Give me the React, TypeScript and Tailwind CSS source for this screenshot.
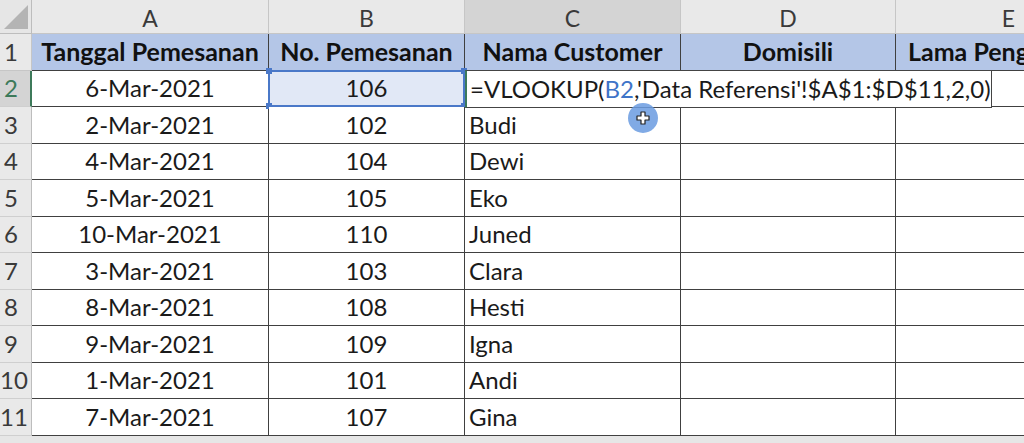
import React from "react";

const rows: [string, string, string][] = [
  ["6-Mar-2021", "106", ""],
  ["2-Mar-2021", "102", "Budi"],
  ["4-Mar-2021", "104", "Dewi"],
  ["5-Mar-2021", "105", "Eko"],
  ["10-Mar-2021", "110", "Juned"],
  ["3-Mar-2021", "103", "Clara"],
  ["8-Mar-2021", "108", "Hesti"],
  ["9-Mar-2021", "109", "Igna"],
  ["1-Mar-2021", "101", "Andi"],
  ["7-Mar-2021", "107", "Gina"],
];

const font = { fontFamily: "Lato, 'Open Sans', sans-serif" };

export default function App() {
  return (
    <div className="w-[1024px] h-[443px] overflow-hidden bg-[#e6e6e6] relative" style={font}>
      <div className="grid grid-cols-[32px_237px_196px_216px_215px_226px] grid-rows-[34px_repeat(11,36.5px)] w-[1122px]">
        {/* Header row */}
        <div className="bg-[#e6e6e6] border-r border-b border-[#bdbdbd] relative">
          <svg className="absolute left-[3px] top-[4px]" width="26" height="26" viewBox="0 0 26 26">
            <polygon points="1,25 25,25 25,1" fill="#b4b4b4" />
          </svg>
        </div>
        {["A", "B", "C", "D", "E"].map((l) => (
          <div
            key={l}
            className={`flex items-center justify-center text-[23px] text-[#3a3a3a] border-r border-b border-[#c6c6c6] ${
              l === "C" ? "bg-[#d4d4d4]" : "bg-[#e9e9e9]"
            }`}
          >
            <span className="pt-[3px]">{l}</span>
          </div>
        ))}

        {/* Row 1 */}
        <div className="flex items-center justify-start pl-[4px] text-[24px] text-[#3a3a3a] bg-[#e9e9e9] border-r border-b border-[#c6c6c6]">
          1
        </div>
        {["Tanggal Pemesanan", "No. Pemesanan", "Nama Customer", "Domisili", "Lama Pengiriman"].map((t, i) => (
          <div
            key={t}
            className={`flex items-center ${i === 4 ? "justify-start pl-[12px]" : "justify-center"} whitespace-nowrap overflow-hidden bg-[#b4c6e7] text-[25px] font-bold text-[#111] border-r border-b border-[#404040]`}
          >
            {t}
          </div>
        ))}

        {rows.map((r, idx) => {
          const n = idx + 2;
          const isSel = n === 2;
          return (
            <React.Fragment key={n}>
              <div
                className={`flex items-center ${n >= 10 ? "justify-start pl-0" : "justify-start pl-[4px]"} text-[24px] border-b border-[#cfcfcf] ${
                  isSel
                    ? "bg-[#d4d4d4] text-[#3d7a5a] border-r-2 border-r-[#3d7a5a]"
                    : "bg-[#e9e9e9] text-[#3a3a3a] border-r border-r-[#bdbdbd]"
                }`}
              >
                {n}
              </div>
              <div className="flex items-center justify-center bg-white text-[24px] text-[#1a1a1a] border-r border-b border-[#404040]">
                {r[0]}
              </div>
              <div
                className={`relative flex items-center justify-center text-[24px] text-[#1a1a1a] border-r border-b border-[#404040] ${
                  isSel ? "bg-[#e1e8f6]" : "bg-white"
                }`}
              >
                {r[1]}
                {isSel && (
                  <>
                    <div className="absolute -left-px -top-px -right-px -bottom-px border-2 border-[#4a78c8]" />
                    <div className="absolute -left-[3px] -top-[3px] w-[6px] h-[6px] bg-[#4a78c8]" />
                    <div className="absolute -right-[3px] -top-[3px] w-[6px] h-[6px] bg-[#4a78c8]" />
                    <div className="absolute -left-[3px] -bottom-[3px] w-[6px] h-[6px] bg-[#4a78c8]" />
                    <div className="absolute -right-[3px] -bottom-[3px] w-[6px] h-[6px] bg-[#4a78c8]" />
                  </>
                )}
              </div>
              <div className="relative flex items-center pl-[4px] bg-white text-[24px] text-[#1a1a1a] border-r border-b border-[#404040]">
                {isSel ? (
                  <div className="absolute left-0 -top-px w-[527px] h-[38px] z-10 bg-white border border-[#444] border-l-2 border-l-[#3d7a5a] flex items-center pl-[3px] whitespace-nowrap">
                    <span>=VLOOKUP(</span>
                    <span className="text-[#3f74c8]">B2</span>
                    <span>,'Data Referensi'!$A$1:$D$11,2,0)</span>
                  </div>
                ) : (
                  r[2]
                )}
              </div>
              <div className="bg-white border-r border-b border-[#404040]" />
              <div className="bg-white border-r border-b border-[#404040]" />
            </React.Fragment>
          );
        })}
      </div>

      {/* mouse cursor highlight */}
      <div className="absolute left-[628px] top-[103px] w-[30px] h-[30px] rounded-full bg-[#6a9be0]/85 z-20 flex items-center justify-center">
        <svg width="14" height="14" viewBox="0 0 14 14">
          <path
            d="M5 1h4v4h4v4H9v4H5V9H1V5h4z"
            fill="#ffffff"
            stroke="#222"
            strokeWidth="1.2"
            strokeLinejoin="round"
          />
        </svg>
      </div>
    </div>
  );
}
